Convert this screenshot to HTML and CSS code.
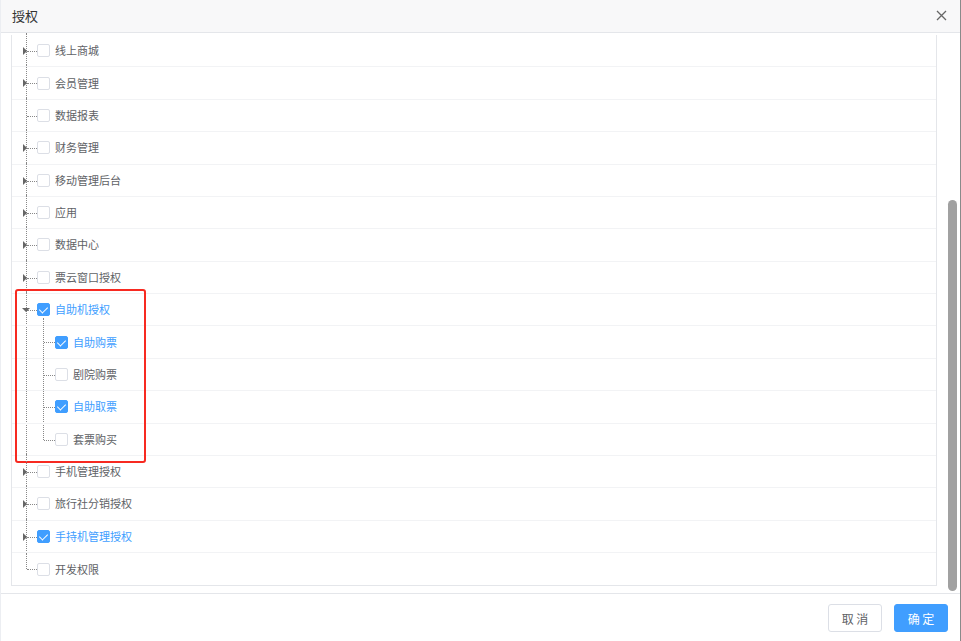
FILE: index.html
```html
<!DOCTYPE html>
<html lang="zh-CN">
<head>
  <meta charset="UTF-8">
  <meta name="viewport" content="width=device-width, initial-scale=1.0">
  <link rel="stylesheet" href="styles.css">
  <title>授权</title>
</head>
<body>
  <div class="dialog">
    <div class="dialog-header">
      <span class="dialog-title">授权</span>
      <button class="dialog-close" type="button" aria-label="关闭">
        <svg width="11" height="11" viewBox="0 0 11 11"><path d="M1 1L10 10M10 1L1 10" stroke="#666" stroke-width="1.3" fill="none"/></svg>
      </button>
    </div>
    <div class="dialog-body">
      <div class="content">
        <ul class="tree">
          <li class="node"><div class="row"><i class="caret"></i><span class="checkbox"></span><span class="label">线上商城</span></div></li>
          <li class="node"><div class="row"><i class="caret"></i><span class="checkbox"></span><span class="label">会员管理</span></div></li>
          <li class="node"><div class="row"><span class="checkbox"></span><span class="label">数据报表</span></div></li>
          <li class="node"><div class="row"><i class="caret"></i><span class="checkbox"></span><span class="label">财务管理</span></div></li>
          <li class="node"><div class="row"><i class="caret"></i><span class="checkbox"></span><span class="label">移动管理后台</span></div></li>
          <li class="node"><div class="row"><i class="caret"></i><span class="checkbox"></span><span class="label">应用</span></div></li>
          <li class="node"><div class="row"><i class="caret"></i><span class="checkbox"></span><span class="label">数据中心</span></div></li>
          <li class="node"><div class="row"><i class="caret"></i><span class="checkbox"></span><span class="label">票云窗口授权</span></div></li>
          <li class="node open">
            <div class="row checked"><i class="caret down"></i><span class="checkbox"></span><span class="label">自助机授权</span></div>
            <ul class="children">
              <li class="child"><div class="row checked"><span class="checkbox"></span><span class="label">自助购票</span></div></li>
              <li class="child"><div class="row"><span class="checkbox"></span><span class="label">剧院购票</span></div></li>
              <li class="child"><div class="row checked"><span class="checkbox"></span><span class="label">自助取票</span></div></li>
              <li class="child"><div class="row"><span class="checkbox"></span><span class="label">套票购买</span></div></li>
            </ul>
            <div class="highlight"></div>
          </li>
          <li class="node"><div class="row"><i class="caret"></i><span class="checkbox"></span><span class="label">手机管理授权</span></div></li>
          <li class="node"><div class="row"><i class="caret"></i><span class="checkbox"></span><span class="label">旅行社分销授权</span></div></li>
          <li class="node"><div class="row checked"><i class="caret"></i><span class="checkbox"></span><span class="label">手持机管理授权</span></div></li>
          <li class="node"><div class="row last"><span class="checkbox"></span><span class="label">开发权限</span></div></li>
        </ul>
      </div>
      <div class="scrollbar"><div class="thumb"></div></div>
    </div>
    <div class="dialog-footer">
      <button class="btn" type="button">取 消</button>
      <button class="btn btn-primary" type="button">确 定</button>
    </div>
  </div>
</body>
</html>
```

FILE: styles.css
```css
* {
  box-sizing: border-box;
}
body {
  margin: 0;
  font-family: 'Noto Sans CJK SC', 'Noto Sans', sans-serif;
  font-size: 11px;
  color: #606266;
  background: #fff;
}
ul {
  list-style: none;
  margin: 0;
  padding: 0;
}
.dialog {
  width: 961px;
  height: 641px;
  display: flex;
  flex-direction: column;
  border-left: 1px solid #eceef2;
  border-right: 1px solid #8a8a8a;
  overflow: hidden;
}
.dialog-header {
  height: 33px;
  flex: none;
  display: flex;
  align-items: center;
  justify-content: space-between;
  padding: 0 12px 1px 11px;
  background: #f8f8f9;
  border-bottom: 1px solid #e4e6ea;
}
.dialog-title {
  font-size: 13px;
  color: #333;
  line-height: 30px;
}
.dialog-close {
  border: none;
  background: none;
  padding: 0;
  width: 12px;
  height: 12px;
  display: flex;
  cursor: pointer;
}
.dialog-body {
  height: 560px;
  flex: none;
  display: flex;
}
.content {
  width: 936px;
  flex: none;
  padding: 2px 0 0 10px;
  overflow: hidden;
}
.tree {
  border: 1px solid #e4e6ea;
  border-top: none;
  position: relative;
}
.node {
  position: relative;
}
.node::before {
  content: '';
  position: absolute;
  left: 14px;
  top: -2px;
  bottom: 0;
  border-left: 1px dotted #888;
}
.node:last-child::before {
  top: 0;
  bottom: auto;
  height: 16px;
}
.row {
  position: relative;
  height: 32.375px;
  display: flex;
  align-items: center;
  padding-left: 25px;
  border-bottom: 1px solid #f2f3f5;
}
.row.last {
  border-bottom: none;
}
.row::before {
  content: '';
  position: absolute;
  left: 15px;
  top: 16px;
  width: 10px;
  border-top: 1px dotted #888;
}
.caret {
  position: absolute;
  left: 11px;
  top: 12px;
  width: 0;
  height: 0;
  border-top: 4px solid transparent;
  border-bottom: 4px solid transparent;
  border-left: 4px solid #666;
}
.caret.down {
  left: 10px;
  top: 14px;
  border-left: 4px solid transparent;
  border-right: 4px solid transparent;
  border-top: 4px solid #666;
  border-bottom: none;
}
.checkbox {
  position: relative;
  width: 13px;
  height: 13px;
  border: 1px solid #dcdfe6;
  border-radius: 2px;
  background: #fff;
  margin-right: 5px;
  flex: none;
}
.label {
  line-height: 1;
}
.row.checked .checkbox {
  background: #409eff;
  border-color: #409eff;
}
.row.checked .checkbox::after {
  content: '';
  position: absolute;
  left: 3px;
  top: 1px;
  width: 4px;
  height: 7px;
  border-right: 1px solid #fff;
  border-bottom: 1px solid #fff;
  transform: rotate(45deg);
}
.row.checked .label {
  color: #409eff;
}
.children {
  position: relative;
}
.children::before {
  content: '';
  position: absolute;
  left: 31px;
  top: -8px;
  bottom: 16px;
  border-left: 1px dotted #888;
}
.child .row {
  padding-left: 43px;
}
.child .row::before {
  left: 32px;
  width: 11px;
}
.highlight {
  position: absolute;
  left: 3px;
  top: -5px;
  width: 131px;
  height: 174px;
  border: 2px solid #f72a21;
  border-radius: 3px;
  pointer-events: none;
}
.scrollbar {
  flex: 1;
  padding: 167px 0 0 11px;
}
.thumb {
  width: 9px;
  height: 391px;
  border-radius: 5px;
  background: #a1a1a1;
}
.dialog-footer {
  flex: 1;
  display: flex;
  justify-content: flex-end;
  align-items: flex-start;
  gap: 12px;
  padding: 10px 12px 0 0;
  border-top: 1px solid #e4e6ea;
}
.btn {
  width: 54px;
  height: 28px;
  font-family: inherit;
  font-size: 12px;
  color: #606266;
  background: #fff;
  border: 1px solid #dcdfe6;
  border-radius: 3px;
  cursor: pointer;
}
.btn-primary {
  color: #fff;
  background: #409eff;
  border-color: #409eff;
}
```
